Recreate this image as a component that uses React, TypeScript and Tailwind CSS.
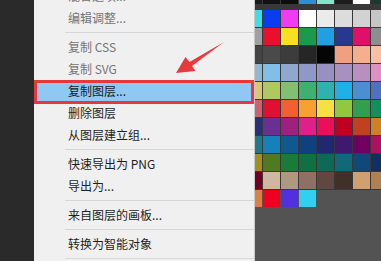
import React from "react";

type Item = { t: string; d?: boolean; h?: boolean } | "sep";

const items: Item[] = [
  { t: "混合选项...", d: true },
  { t: "编辑调整...", d: true },
  "sep",
  { t: "复制 CSS", d: true },
  { t: "复制 SVG", d: true },
  { t: "复制图层...", h: true },
  { t: "删除图层" },
  { t: "从图层建立组..." },
  "sep",
  { t: "快速导出为 PNG" },
  { t: "导出为..." },
  "sep",
  { t: "来自图层的画板..." },
  "sep",
  { t: "转换为智能对象" },
  "sep",
];

const topRow = ["#1a1a1a", "#111111", "#0d0d0d", "#2a8fd8", "#80e6c6", "#1c1c1c", "#ffffff", "#1e3a30"];

const rows: string[][] = [
  ["#3ddfe6", "#0c3cf0", "#f03cf0", "#ffffff", "#ebebeb", "#dcdcdc", "#d2d2d2", "#c6c6c6"],
  ["#a0a0a0", "#e8102a", "#f8e020", "#1a9a4a", "#20a0e0", "#283890", "#e0106a", "#8e8e8e"],
  ["#444444", "#4a4a4a", "#3c3c3c", "#262626", "#050505", "#f0a080", "#f4b08e", "#f8c0a0"],
  ["#90b8d0", "#80c0e8", "#90a8d0", "#9098c8", "#9890c0", "#a890c0", "#b890c0", "#e090c0"],
  ["#d8c870", "#b0c860", "#80c070", "#40b070", "#30b0b0", "#20b0e8", "#4a90d0", "#5070c0"],
  ["#d06070", "#e01030", "#f06030", "#f8a030", "#f8e040", "#90c840", "#30a050", "#10905a"],
  ["#283078", "#6a2f90", "#a02080", "#e0208a", "#e8105a", "#c00020", "#c04020", "#d08020"],
  ["#207888", "#1880b8", "#105890", "#104080", "#202870", "#401870", "#700060", "#b01060"],
  ["#a09020", "#507a20", "#1a7a38", "#107040", "#106858", "#106878", "#104878", "#103060"],
  ["#700020", "#d0b8a0", "#b09880", "#907060", "#604840", "#403028", "#d0a070", "#b08050"],
];

const lastRow = ["#e08040", "#f00020", "#5030e0", "#30d0f0"];

export default function App() {
  return (
    <div className="relative flex w-[381px] h-[261px] overflow-hidden bg-[#535353] font-['Noto_Sans_CJK_SC','Noto_Sans',sans-serif]">
      <div className="w-[34px] h-full shrink-0 bg-[#2a2a2a]" />
      <div className="w-[221px] h-full shrink-0 bg-[#f0f0f0] border-r border-[#c8c8c8] overflow-hidden">
        <div className="flex flex-col mt-[-15px]">
          {items.map((it, i) =>
            it === "sep" ? (
              <div key={i} className="h-[7px] flex items-center pl-[31px]">
                <div className="h-px w-full bg-[#d6d6d6]" />
              </div>
            ) : (
              <div
                key={i}
                className={
                  "h-[22px] flex items-center pl-[34px] text-[12px] leading-none " +
                  (it.h ? "bg-[#90c8f4] text-[#1a1a1a]" : it.d ? "text-[#757575]" : "text-[#1e1e1e]")
                }
              >
                {it.t}
              </div>
            )
          )}
        </div>
      </div>
      <div className="flex-1 h-full overflow-hidden bg-[#535353]">
        <div className="ml-[-10px] w-[143px] bg-[#383838] mt-[-13px] pb-px">
          <div className="grid grid-cols-[repeat(8,17px)] gap-px">
            {topRow.map((c, i) => (
              <div key={i} className="h-[17px]" style={{ backgroundColor: c }} />
            ))}
          </div>
          <div className="h-[6px]" />
          <div className="grid grid-cols-[repeat(8,17px)] gap-px">
            {rows.flat().map((c, i) => (
              <div key={i} className="h-[17px]" style={{ backgroundColor: c }} />
            ))}
          </div>
        </div>
        <div className="ml-[-10px] flex gap-px">
          {lastRow.map((c, i) => (
            <div key={i} className="w-[17px] h-[17px]" style={{ backgroundColor: c }} />
          ))}
        </div>
      </div>
      <div className="absolute left-[34px] top-[80px] w-[220px] h-[24px] border-[3px] border-[#e5383b]" />
      <svg className="absolute left-0 top-0" width="381" height="261" viewBox="0 0 381 261">
        <polygon points="176,73 185.5,57 189.5,62 224,42 192,66 195.5,71" fill="#e63a3c" />
      </svg>
    </div>
  );
}
